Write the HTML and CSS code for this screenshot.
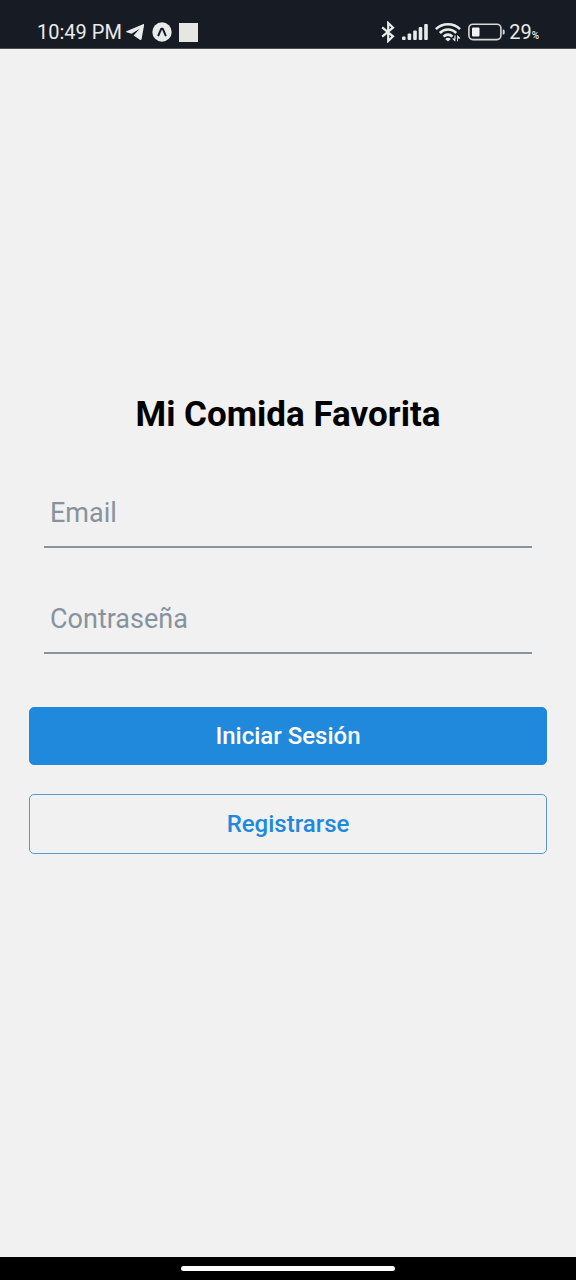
FILE: index.html
```html
<!DOCTYPE html>
<html lang="es">
<head>
<meta charset="utf-8">
<meta name="viewport" content="width=device-width, initial-scale=1">
<title>Mi Comida Favorita</title>
<link rel="stylesheet" href="styles.css">
</head>
<body>
<div class="screen">
  <header class="status">
    <div class="status-left">
      <span class="clock">10:49 PM</span>
      <svg class="icon-telegram" width="18" height="18" viewBox="0 0 18 18" aria-hidden="true"><path d="M.4 8.300 17 1.200c.8-.3 1.200.1 1.100 1l-2.500 13.900c-.2 1-.9 1.200-1.700.700L7.600 12.400 13.600 5.800 5.600 10.800.6 9.300c-.6-.2-.7-.7-.2-1z" fill="#e8ebea"/></svg>
      <svg class="icon-expo" width="20" height="20" viewBox="0 0 20 20" aria-hidden="true"><circle cx="10" cy="10" r="9.700" fill="#e8ebea"/><path d="M6.400 13.400 9.300 6.700h1.400l2.900 6.700" fill="none" stroke="#171c24" stroke-width="2" stroke-linecap="round" stroke-linejoin="round"/></svg>
      <span class="notice"></span>
    </div>
    <div class="status-right">
      <svg width="14" height="22" viewBox="0 0 14 22" aria-hidden="true"><path d="M1.200 6.300 12 15.300 7.200 20V2L12 6.700 1.200 15.700" fill="none" stroke="#e8ebea" stroke-width="2.200" stroke-linejoin="miter"/></svg>
      <svg class="icon-signal" width="26" height="18" viewBox="0 0 26 18" fill="#e8ebea" aria-hidden="true"><rect x="0" y="13.500" width="3.600" height="3.500" rx="1"/><rect x="5.600" y="10.500" width="3.600" height="6.500" rx="1"/><rect x="11.200" y="7.500" width="3.600" height="9.500" rx="1"/><rect x="16.700" y="4" width="3.600" height="13" rx="1"/><rect x="22.200" y="1" width="3.600" height="16" rx="1"/></svg>
      <svg class="icon-wifi" width="26" height="20" viewBox="0 0 26 20" aria-hidden="true"><g fill="none" stroke="#e8ebea" stroke-width="2.600"><path d="M.9 7.200C7.500.6 18.500.6 25 7.200"/><path d="M4.800 11c4.500-4.600 12-4.600 16.400 0"/><path d="M8.600 14.600c2.500-2.600 6.300-2.600 8.800 0"/></g><path d="M10.200 16.900c1.700-1.500 3.900-1.500 5.600 0L13 19.500z" fill="#e8ebea"/><path d="M20 13.500v5.700l-2.300-2.500h2.300zM22.500 19.200v-5.700l2.500 2.700h-2.500z" fill="#e8ebea" stroke="#e8ebea" stroke-width=".7"/></svg>
      <svg class="icon-battery" width="37" height="18" viewBox="0 0 37 18" aria-hidden="true"><rect x=".9" y="1.200" width="32" height="15.400" rx="4" fill="none" stroke="#d5d9dc" stroke-width="1.600"/><rect x="4" y="4.500" width="7.500" height="9" rx="1" fill="#f1f2f1"/><path d="M34.700 6.400h.5q1.500 0 1.500 1.500v2q0 1.500-1.500 1.500h-.5z" fill="#d5d9dc"/></svg>
      <span class="charge">29<small class="percent">%</small></span>
    </div>
  </header>
  <main class="content">
    <h1 class="title">Mi Comida Favorita</h1>
    <form class="form">
      <input class="field" type="email" placeholder="Email" aria-label="Email">
      <input class="field" type="password" placeholder="Contraseña" aria-label="Contraseña">
      <div class="actions">
        <button class="button button-solid" type="submit">Iniciar Sesión</button>
        <button class="button button-outline" type="button">Registrarse</button>
      </div>
    </form>
  </main>
  <footer class="navbar"><span class="handle"></span></footer>
</div>
</body>
</html>
```
FILE: styles.css
```css
* {
  box-sizing: border-box;
}

body {
  margin: 0;
  background: #f1f1f1;
  font-family: Roboto, "Liberation Sans", sans-serif;
}

.screen {
  min-height: 100vh;
  display: flex;
  flex-direction: column;
}

.status {
  display: flex;
  justify-content: space-between;
  align-items: center;
  padding: 16px 37px 0;
  border-bottom: 1px solid #4b4d51;
  background: #171c24;
  color: #e8ebea;
  font-size: 20px;
  line-height: 32px;
}

.status-left,
.status-right {
  display: flex;
  align-items: center;
}

.icon-telegram {
  margin: 0 8px 0 4px;
}

.notice {
  width: 19px;
  height: 19px;
  margin-left: 7px;
  background: #e6e7e3;
}

.icon-signal,
.icon-wifi {
  margin-left: 7px;
}

.icon-battery {
  margin: 0 4px 0 7px;
}

.percent {
  font-size: 10px;
  font-weight: 500;
  line-height: 1;
}

.content {
  flex: 1;
  display: flex;
  flex-direction: column;
  justify-content: center;
  padding: 0 29px 60px;
}

.title {
  margin: 0 0 43px;
  color: #000;
  font-size: 35px;
  font-weight: 700;
  line-height: 44px;
  text-align: center;
}

.form {
  display: flex;
  flex-direction: column;
  gap: 38px;
}

.field {
  height: 68px;
  margin: 0 15px;
  padding: 1px 6px 0;
  border: 0;
  border-bottom: 2px solid #8b959f;
  border-radius: 0;
  outline: 0;
  background: transparent;
  color: #1b1f24;
  font-family: inherit;
  font-size: 27px;
}

.field::placeholder {
  color: #86939e;
  opacity: 1;
}

.actions {
  display: flex;
  flex-direction: column;
  gap: 29px;
  padding-top: 15px;
}

.button {
  padding: 14px;
  border: 1px solid #2089dc;
  border-radius: 5px;
  font-family: inherit;
  font-size: 24px;
  font-weight: 500;
  line-height: 28px;
}

.button-solid {
  background: #2089dc;
  color: #fff;
}

.button-outline {
  padding: 15px 14px;
  border-color: #5a9bcb;
  background: transparent;
  color: #2089dc;
}

.navbar {
  display: flex;
  justify-content: center;
  padding: 9px 0;
  background: #000;
}

.handle {
  width: 37%;
  height: 5px;
  border-radius: 3px;
  background: #fff;
}
```
